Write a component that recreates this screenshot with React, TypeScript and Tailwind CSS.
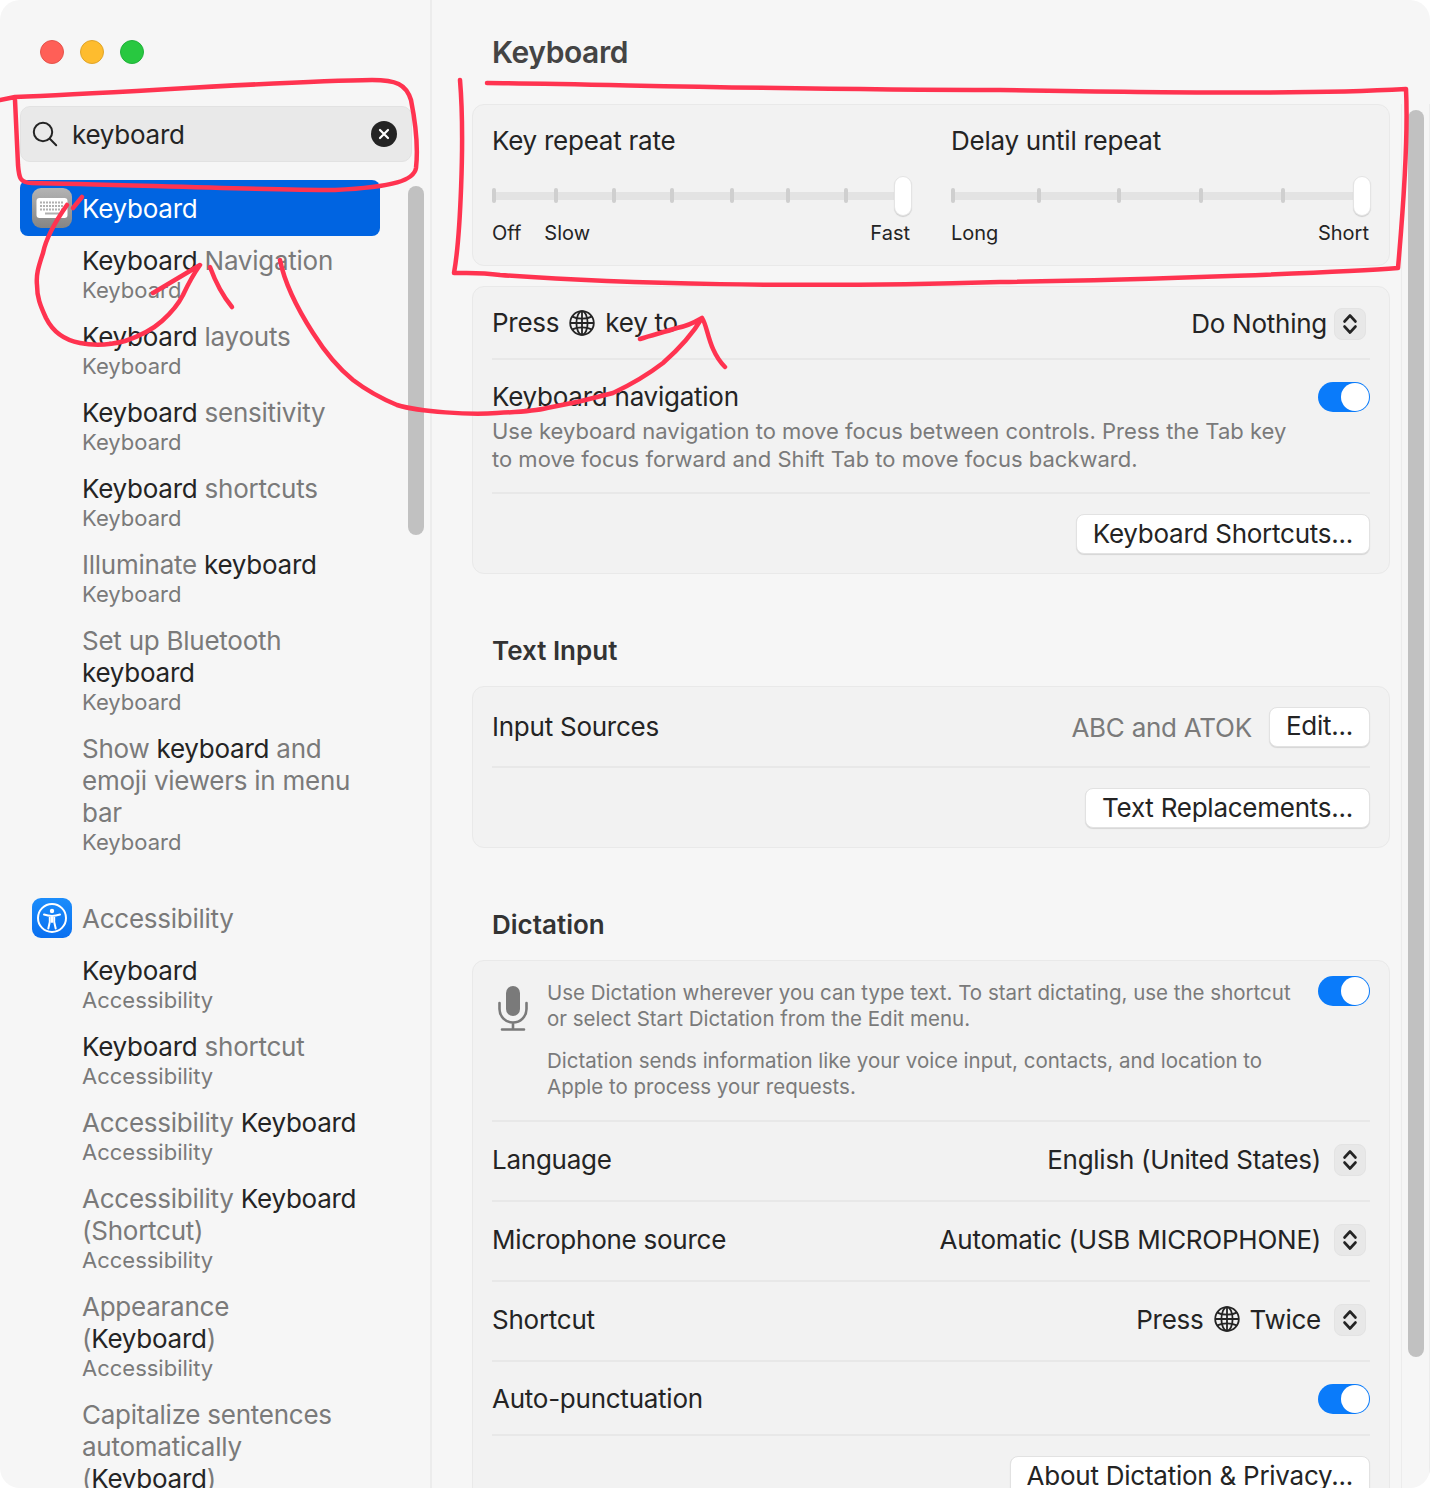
import type { ReactNode } from 'react'

// dimmed part of a search result, the matched word stays dark
function Dim({ children }: { children: ReactNode }) {
  return <span className="text-[#7a7a7a]">{children}</span>
}

function GlobeIcon() {
  return (
    <svg width="26" height="26" viewBox="0 0 26 26" fill="none" stroke="#242424" strokeWidth="1.8" className="shrink-0">
      <circle cx="13" cy="13" r="11.8" />
      <ellipse cx="13" cy="13" rx="5.6" ry="11.8" />
      <path d="M13 1.2v23.6M1.2 13h23.6" />
      <path d="M3.4 6.6c2.6 1.4 6 2.1 9.6 2.1s7-.7 9.6-2.1M3.4 19.4c2.6-1.4 6-2.1 9.6-2.1s7 .7 9.6 2.1" />
    </svg>
  )
}

function Stepper() {
  return (
    <div className="flex h-8 w-8 shrink-0 items-center justify-center rounded-lg border border-[#e3e3e3] bg-[#e8e8e8]">
      <svg width="16" height="24" viewBox="0 0 16 24" fill="none" stroke="#242424" strokeWidth="2.6" strokeLinecap="round" strokeLinejoin="round">
        <path d="M2.500 9.500 8 3.500l5.500 6M2.500 14.500 8 20.500l5.500-6" />
      </svg>
    </div>
  )
}

function Toggle({ className = '' }: { className?: string }) {
  return (
    <div className={`flex h-[30px] w-[52px] shrink-0 items-center justify-end rounded-full bg-[#0a7bfa] pr-px ${className}`}>
      <div className="h-7 w-7 rounded-full bg-white" />
    </div>
  )
}

function Button({ children }: { children: ReactNode }) {
  return (
    <div className="flex h-10 items-center rounded-lg border border-[#e2e2e2] bg-white px-4 pb-0.5 shadow-[0_1px_1px_rgba(0,0,0,0.12)]">
      {children}
    </div>
  )
}

function Divider() {
  return <div className="h-0.5 bg-[#e8e8e8]" />
}

function Slider({ ticks }: { ticks: number[] }) {
  return (
    <div className="relative mt-[19px] h-10 w-[420px]">
      <div className="absolute left-0 top-4 h-2 w-[410px] bg-[#e3e3e3]" />
      {ticks.map((left) => (
        <div key={left} className="absolute top-3 h-[15px] w-1 rounded-sm bg-[#cfcfcf]" style={{ left }} />
      ))}
      <div className="absolute right-0 top-0 h-10 w-[18px] rounded-full border border-[#e4e4e4] bg-white shadow-[0_1px_1px_rgba(0,0,0,0.15)]" />
    </div>
  )
}

function Row({ label, value, height }: { label: ReactNode; value?: ReactNode; height: string }) {
  return (
    <div className={`flex items-center justify-between ${height}`}>
      <div className="flex items-center -translate-y-px">{label}</div>
      {value}
    </div>
  )
}

function PopupValue({ children }: { children: ReactNode }) {
  return (
    <div className="flex items-center gap-[13px] pr-1">
      <div className="flex items-center gap-2.5 -translate-y-px">{children}</div>
      <Stepper />
    </div>
  )
}

function Result({ title, section }: { title: ReactNode; section: string }) {
  return (
    <div className="pb-[17px] pl-[82px]">
      <div className="text-[26px] leading-8">{title}</div>
      <div className="-mt-px text-[22px] leading-7 tracking-normal text-[#7a7a7a]">{section}</div>
    </div>
  )
}

function Sidebar() {
  return (
    <aside className="relative h-full w-[432px] shrink-0 border-r-2 border-[#ececec]">
      <div className="flex gap-4 pl-10 pt-10">
        <div className="h-6 w-6 rounded-full border border-[#e5534b] bg-[#ff5f57]" />
        <div className="h-6 w-6 rounded-full border border-[#e0a52a] bg-[#febc2e]" />
        <div className="h-6 w-6 rounded-full border border-[#20b23a] bg-[#28c840]" />
      </div>

      <div className="ml-5 mt-[42px] flex h-14 w-[392px] items-center rounded-[10px] border border-[#e2e2e2] bg-[#e9e9e9] pl-[11px] pr-[14px]">
        <svg width="26" height="26" viewBox="0 0 26 26" fill="none" stroke="#242424" strokeWidth="2" strokeLinecap="round">
          <circle cx="11" cy="11" r="9.2" />
          <path d="m17.800 17.800 6.400 6.400" />
        </svg>
        <span className="ml-[14px] flex-1 text-[26px]">keyboard</span>
        <div className="flex h-[26px] w-[26px] items-center justify-center rounded-full bg-[#242424]">
          <svg width="12" height="12" viewBox="0 0 12 12" stroke="#fff" strokeWidth="2.2" strokeLinecap="round">
            <path d="m2 2 8 8M10 2l-8 8" />
          </svg>
        </div>
      </div>

      <div className="ml-5 mt-[18px] flex h-14 w-[360px] items-center rounded-lg bg-[#0064e1] pl-3 text-[26px] text-white">
        <div className="flex h-10 w-10 items-center justify-center rounded-[9px] bg-gradient-to-b from-[#b4b4b4] to-[#858585]">
          <svg width="34" height="24" viewBox="0 0 34 24">
            <rect x="1.500" y="2" width="31" height="20" rx="3" fill="#fff" />
            <path d="M5 6.500h24M5 10h24M5 13.500h24" stroke="#b0b0b0" strokeWidth="2" strokeDasharray="2 1" />
            <path d="M10 17.500h14" stroke="#b0b0b0" strokeWidth="2" />
          </svg>
        </div>
        <span className="ml-2.5">Keyboard</span>
      </div>

      <div className="pt-[9px]">
        <Result title={<>Keyboard <Dim>Navigation</Dim></>} section="Keyboard" />
        <Result title={<>Keyboard <Dim>layouts</Dim></>} section="Keyboard" />
        <Result title={<>Keyboard <Dim>sensitivity</Dim></>} section="Keyboard" />
        <Result title={<>Keyboard <Dim>shortcuts</Dim></>} section="Keyboard" />
        <Result title={<><Dim>Illuminate</Dim> keyboard</>} section="Keyboard" />
        <Result title={<><Dim>Set up Bluetooth</Dim><br />keyboard</>} section="Keyboard" />
        <Result title={<><Dim>Show</Dim> keyboard <Dim>and</Dim><br /><Dim>emoji viewers in menu</Dim><br /><Dim>bar</Dim></>} section="Keyboard" />
      </div>

      <div className="ml-8 mt-[25px] flex h-10 items-center text-[26px] text-[#7a7a7a]">
        <div className="flex h-10 w-10 items-center justify-center rounded-[9px] bg-gradient-to-b from-[#1c8dfb] to-[#0a6ff0]">
          <svg width="32" height="32" viewBox="0 0 32 32" fill="none" stroke="#fff">
            <circle cx="16" cy="16" r="14" strokeWidth="2" />
            <circle cx="16" cy="9" r="2.200" fill="#fff" stroke="none" />
            <path d="M8 12.500c3 1 5.300 1.400 8 1.400s5-.4 8-1.400M16 14v6M13.800 15v5l-1.500 6.500M18.200 15v5l1.500 6.500" strokeWidth="2" strokeLinecap="round" />
          </svg>
        </div>
        <span className="ml-2.5">Accessibility</span>
      </div>

      <div className="pt-[17px]">
        <Result title="Keyboard" section="Accessibility" />
        <Result title={<>Keyboard <Dim>shortcut</Dim></>} section="Accessibility" />
        <Result title={<><Dim>Accessibility</Dim> Keyboard</>} section="Accessibility" />
        <Result title={<><Dim>Accessibility</Dim> Keyboard<br /><Dim>(Shortcut)</Dim></>} section="Accessibility" />
        <Result title={<><Dim>Appearance</Dim><br /><Dim>(</Dim>Keyboard<Dim>)</Dim></>} section="Accessibility" />
        <Result title={<><Dim>Capitalize sentences</Dim><br /><Dim>automatically</Dim><br /><Dim>(</Dim>Keyboard<Dim>)</Dim></>} section="Accessibility" />
      </div>

      <div className="absolute left-[408px] top-[186px] h-[349px] w-4 rounded-full bg-[#c1c1c1]" />
    </aside>
  )
}

function Card({ children }: { children: ReactNode }) {
  return <section className="rounded-xl border border-[#e9e9e9] bg-[#f2f2f2] px-[19px]">{children}</section>
}

function Heading({ children }: { children: ReactNode }) {
  return <h2 className="pb-[19px] pl-5 pt-[61px] text-[26px] font-semibold leading-8 tracking-normal text-[#333]">{children}</h2>
}

function Content() {
  return (
    <main className="relative h-full flex-1">
      <div className="ml-10 w-[918px]">
        <h1 className="flex h-[104px] items-center pl-5 text-[30px] font-semibold tracking-[-0.4px] text-[#444]">Keyboard</h1>

        <section className="flex h-[162px] gap-[39px] rounded-xl border border-[#e9e9e9] bg-[#f2f2f2] px-[19px] pt-5">
          <div className="w-[420px]">
            <div className="text-[26px] leading-8">Key repeat rate</div>
            <Slider ticks={[0, 62, 120, 178, 238, 294, 352]} />
            <div className="mt-1 flex text-[20px] leading-[26px] tracking-normal">
              <span>Off</span>
              <span className="ml-[23px]">Slow</span>
              <span className="ml-auto pr-0.5">Fast</span>
            </div>
          </div>
          <div className="w-[420px]">
            <div className="text-[26px] leading-8">Delay until repeat</div>
            <Slider ticks={[0, 86, 166, 248, 330]} />
            <div className="mt-1 flex justify-between text-[20px] leading-[26px] tracking-normal">
              <span>Long</span>
              <span className="pr-0.5">Short</span>
            </div>
          </div>
        </section>

        <div className="mt-5">
          <Card>
            <Row
              height="h-[71px]"
              label={<div className="flex translate-y-px items-center gap-2.5">Press <GlobeIcon /> key to</div>}
              value={<div className="flex translate-y-px items-center gap-[7px] pr-1"><span>Do Nothing</span><Stepper /></div>}
            />
            <Divider />
            <div className="flex items-start justify-between pb-[19px] pt-[21px]">
              <div>
                <div className="text-[26px] leading-8">Keyboard navigation</div>
                <p className="mt-1 whitespace-nowrap text-[22px] leading-7 tracking-normal text-[#7a7a7a]">
                  Use keyboard navigation to move focus between controls. Press the Tab key
                  <br />
                  to move focus forward and Shift Tab to move focus backward.
                </p>
              </div>
              <Toggle className="mt-px" />
            </div>
            <Divider />
            <div className="flex justify-end pb-[19px] pt-5">
              <Button>Keyboard Shortcuts...</Button>
            </div>
          </Card>
        </div>

        <Heading>Text Input</Heading>
        <Card>
          <Row
            height="h-[79px]"
            label={<span className="translate-y-px">Input Sources</span>}
            value={<div className="flex items-center gap-[17px]"><span className="translate-y-px text-[#7a7a7a]">ABC and ATOK</span><Button>Edit...</Button></div>}
          />
          <Divider />
          <div className="flex justify-end pb-[19px] pt-5">
            <Button>Text Replacements...</Button>
          </div>
        </Card>

        <Heading>Dictation</Heading>
        <Card>
          <div className="flex items-start pb-5 pt-[19px]">
            <svg width="30" height="46" viewBox="0 0 30 46" fill="none" className="ml-1.5 mt-1.5 shrink-0">
              <rect x="8" y="0" width="14" height="30" rx="7" fill="#7a7a7a" />
              <path d="M1.500 17v6a13.500 13.500 0 0 0 27 0v-6M15 36.500V43M4 43.500h22" stroke="#7a7a7a" strokeWidth="2.6" strokeLinecap="round" />
            </svg>
            <div className="ml-[19px] flex-1 whitespace-nowrap text-[20.5px] leading-[26px] tracking-normal text-[#7a7a7a]">
              <p>
                Use Dictation wherever you can type text. To start dictating, use the shortcut
                <br />
                or select Start Dictation from the Edit menu.
              </p>
              <p className="mt-4">
                Dictation sends information like your voice input, contacts, and location to
                <br />
                Apple to process your requests.
              </p>
            </div>
            <Toggle className="-mt-1" />
          </div>
          <Divider />
          <Row height="h-[78px] pb-0.5" label="Language" value={<PopupValue>English (United States)</PopupValue>} />
          <Divider />
          <Row height="h-[78px] pb-0.5" label="Microphone source" value={<PopupValue>Automatic (USB MICROPHONE)</PopupValue>} />
          <Divider />
          <Row height="h-[78px] pb-0.5" label="Shortcut" value={<PopupValue>Press <GlobeIcon /> Twice</PopupValue>} />
          <Divider />
          <Row height="h-[72px] pt-0.5" label="Auto-punctuation" value={<Toggle />} />
          <Divider />
          <div className="flex justify-end pb-5 pt-5">
            <Button>About Dictation &amp; Privacy...</Button>
          </div>
        </Card>
      </div>

      <div className="absolute bottom-0 right-0 top-[104px] w-[29px] border-x border-[#ececec]">
        <div className="ml-1.5 mt-1.5 h-[1247px] w-4 rounded-full bg-[#c1c1c1]" />
      </div>
    </main>
  )
}

// the red pen marks drawn on top of the screenshot
function Scribbles() {
  return (
    <svg className="pointer-events-none absolute inset-0" width="1430" height="1488" viewBox="0 0 1430 1488" fill="none" stroke="#ff3350" strokeWidth="4.5" strokeLinecap="round" strokeLinejoin="round">
      <path d="M0 100 15 97C120 93 280 81 372 80 396 80 406 84 411 100 416 125 418 150 416 168 414 180 395 187 335 190 250 190 110 184 32 183 20 183 19 178 18 165L15 100" />
      <path d="M82 197 73 208" />
      <path d="M67 205C55 222 46 238 43 253 38 268 36 275 37 285 37 297 40 305 46 318 53 332 64 340 80 343 95 346 110 345 125 341 140 336 152 330 162 321 172 312 178 305 183 295 190 280 195 272 200 265L153 293" />
      <path d="M210 267C214 278 222 295 232 307" />
      <path d="M280 260C284 280 295 305 313 333 325 352 337 367 353 380 370 393 385 400 397 405 420 412 470 415 497 413 520 412 535 411 547 408 575 403 595 398 613 393 630 385 650 373 663 363 680 348 692 335 702 318 690 325 683 327 677 328 665 332 652 335 640 339M702 318C708 326 708 350 725 367" />
      <path d="M487 83C600 84 780 90 1000 90 1150 92 1300 95 1406 89 1408 130 1404 200 1398 268 1350 272 1150 280 1000 282 800 288 620 284 500 275 480 272 465 273 454 273 460 240 465 140 460 80" />
    </svg>
  )
}

export default function App() {
  return (
    <div className="relative h-[1488px] w-[1430px] overflow-hidden bg-white font-[Inter,sans-serif] text-[26px] tracking-[-0.25px] text-[#242424]">
      <div className="flex h-full overflow-hidden rounded-[20px] bg-[#f6f6f6]">
        <Sidebar />
        <Content />
      </div>
      <Scribbles />
    </div>
  )
}
